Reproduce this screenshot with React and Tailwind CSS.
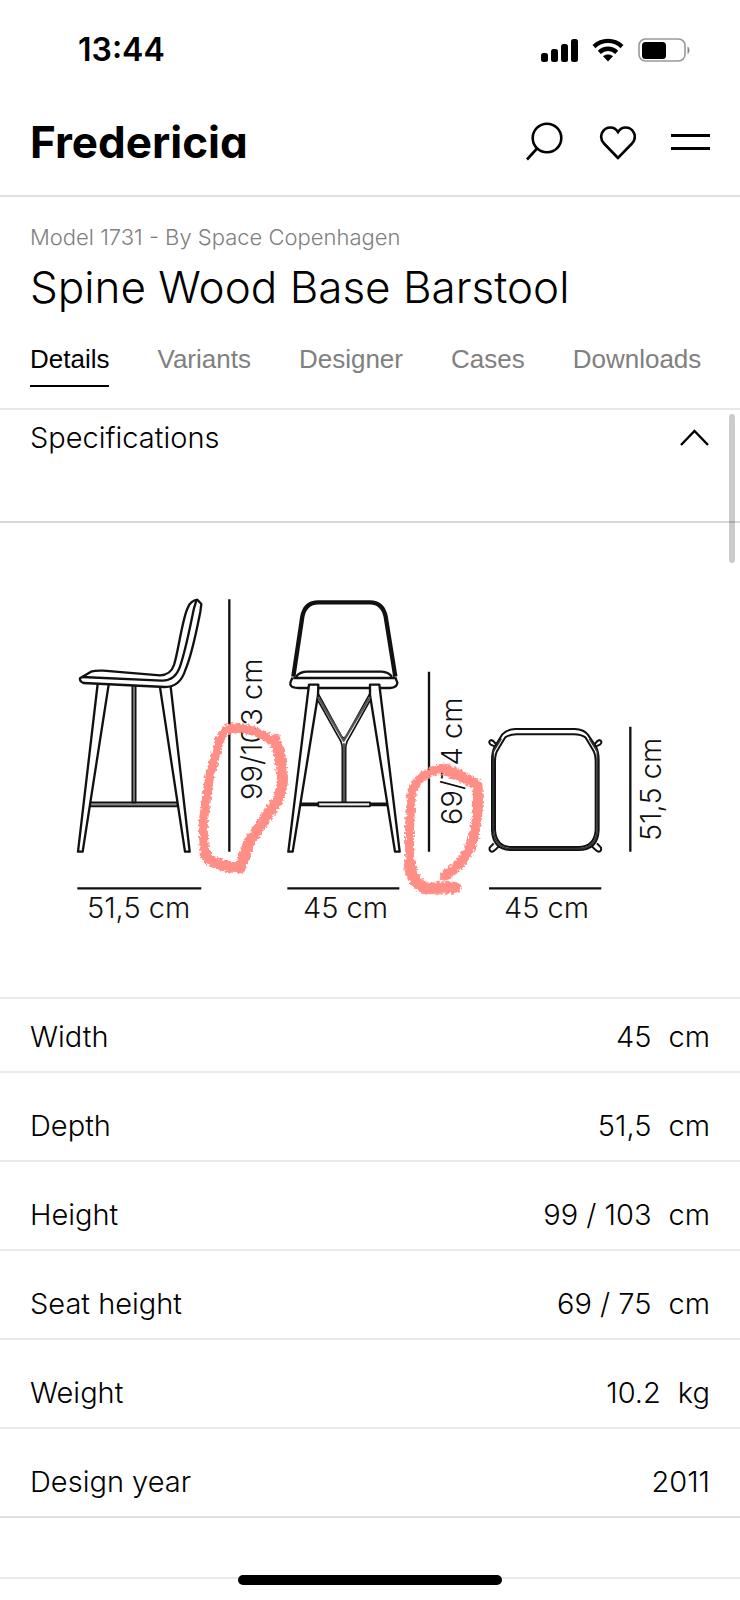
import { useState } from 'react';

const tabs = ['Details', 'Variants', 'Designer', 'Cases', 'Downloads'];

const specs = [
  { label: 'Width', value: '45', unit: 'cm' },
  { label: 'Depth', value: '51,5', unit: 'cm' },
  { label: 'Height', value: '99 / 103', unit: 'cm' },
  { label: 'Seat height', value: '69 / 75', unit: 'cm' },
  { label: 'Weight', value: '10.2', unit: 'kg' },
  { label: 'Design year', value: '2011' },
];

function StatusBar() {
  return (
    <div className="flex h-24 items-center justify-between pl-[78px] pr-[50px] pt-1">
      <span className="font-['Inter',sans-serif] text-[32px] font-semibold leading-none">13:44</span>
      <div className="flex items-center gap-[14px]">
        <svg width="38" height="24" viewBox="0 0 38 24" aria-hidden="true">
          <rect x="1" y="15" width="7" height="9" rx="2.5" />
          <rect x="11" y="11" width="7" height="13" rx="2.5" />
          <rect x="21" y="6" width="7" height="18" rx="2.5" />
          <rect x="31" y="1" width="7" height="23" rx="2.5" />
        </svg>
        <svg width="32" height="24" viewBox="0 0 32 24" fill="none" stroke="black" aria-hidden="true">
          <path d="M2 8.6C10 1 22 1 30 8.6" strokeWidth="4.4" />
          <path d="M7.3 14.3C12.5 9.6 19.5 9.6 24.7 14.3" strokeWidth="4.4" />
          <path d="M16 23.5l-5-5.2c3-2.4 7-2.4 10 0z" fill="black" stroke="none" />
        </svg>
        <svg width="52" height="24" viewBox="0 0 52 24" aria-hidden="true">
          <rect x="1" y="1" width="46" height="22" rx="6.5" fill="none" stroke="#999" strokeWidth="1.6" />
          <rect x="4" y="4" width="24" height="17" rx="3.5" />
          <path d="M49.5 8.5c2.6 1 2.6 6.500 0 7.500z" fill="#888" />
        </svg>
      </div>
    </div>
  );
}

function Header() {
  return (
    <header className="flex h-[101px] items-center justify-between border-b-2 border-[#dedede] px-[30px] pb-2">
      <a href="#" className="font-['Inter',sans-serif] text-[44px] font-bold leading-none [font-feature-settings:'cv11']">
        Fredericia
      </a>
      <div className="flex items-center gap-[35px]">
        <button type="button" aria-label="Search">
          <svg width="37" height="40" viewBox="0 0 37 40" fill="none" stroke="black" strokeWidth="2.6" className="overflow-visible">
            <circle cx="20" cy="16" r="14.300" />
            <path d="M10.500 26L0 37.500" />
          </svg>
        </button>
        <button type="button" aria-label="Favourites">
          <svg width="37" height="40" viewBox="0 0 37 40" fill="none" stroke="black" strokeWidth="2.6">
            <path d="M19 36L5 21.500C-1.500 14 4.500 5.500 11.500 5.500c3.500 0 6 2 7.500 4.500 1.500-2.500 4-4.500 7.500-4.500 7 0 13 8.500 6.500 16z" />
          </svg>
        </button>
        <button type="button" aria-label="Menu">
          <svg width="39" height="40" viewBox="0 0 39 40" fill="none" stroke="black" strokeWidth="3">
            <path d="M0 13.500h39M0 26.500h39" />
          </svg>
        </button>
      </div>
    </header>
  );
}

function Drawing() {
  const third = 'scale(.33333)';
  return (
    <svg
      viewBox="0 0 740 474"
      className="block h-auto w-full font-['Inter',sans-serif] text-[29px] font-light"
      fill="none"
      stroke="#111"
      strokeLinejoin="round"
      role="img"
      aria-label="Dimensions"
    >
      <defs>
        <filter id="crayon" x="-10%" y="-10%" width="120%" height="120%">
          <feTurbulence type="fractalNoise" baseFrequency=".35" numOctaves="2" seed="4" />
          <feDisplacementMap in="SourceGraphic" scale="6" xChannelSelector="R" yChannelSelector="G" />
        </filter>
      </defs>

      {/* Side view */}
      <g transform={`translate(60 57) ${third}`} strokeWidth="7">
        <path d="M60 295L93 275Q105 271 130 272L300 286Q332 285 342 255C355 215 368 110 384 82Q392 62 412 59L424 72L421 95C410 150 397 220 376 270Q360 321 315 321L70 309Q58 304 60 295Z" />
        <path d="M66 291L305 302Q345 303 360 260C380 200 393 125 402 85L409 62" />
        <path d="M113 312L54 815H68L146 314M300 322L375 815H389L332 320" />
        <path d="M217 318H227V668H217ZM92 667H351L353 679H90Z" fill="#888" strokeWidth="5" />
        <path d="M508 58V815M52 925H424" />
      </g>

      {/* Front view */}
      <g transform={`translate(270 57) ${third}`} strokeWidth="7">
        <path d="M70 290L97 110Q105 67 145 67H300Q338 67 347 110L376 290" strokeWidth="13" />
        <path d="M70 294H376M78 290Q90 275 112 275H335Q355 276 366 290" />
        <path d="M68 293Q58 310 62 316Q66 324 85 324H360Q382 322 382 308L376 292" />
        <path d="M117 314H145L144 345L68 815H55ZM300 314H328L389 815H375L300 345Z" fill="white" />
        <path d="M144 340L215 470Q221 477 228 470L300 340M144 362L213 485Q217 495 217 510V667H227V510Q227 495 231 485L300 362" strokeWidth="5" />
        <path d="M144 351L221 482L300 351M222 490V665" stroke="#555" strokeWidth="7" />
        <path d="M92 673H352" strokeWidth="11" />
        <path d="M145 667H300V679H145Z" fill="#eee" strokeWidth="5" />
        <path d="M477 275V815M52 925H388" />
      </g>

      {/* Top view */}
      <g transform={`translate(460 157) ${third}`} strokeWidth="6">
        <path d="M106 200L92 194Q84 186 91 181Q98 178 106 190L110 198M406 200L420 194Q428 186 421 181Q414 178 406 190L402 198" />
        <path d="M101 490L89 503Q87 514 96 515Q103 514 116 499M411 490L423 503Q425 514 416 515Q409 514 396 499" />
        <path d="M165 147H345Q370 148 383 163L408 200Q416 215 416 240V450Q414 510 355 510H155Q98 510 96 450V240Q96 215 104 200L127 163Q140 148 165 147Z" />
        <path d="M170 163H340Q365 164 376 172L396 205Q407 220 407 245V450Q403 501 355 501H155Q109 501 105 450V245Q105 220 116 205L136 172Q147 164 170 163Z" />
        <path d="M100 215V450Q105 506 155 506H355Q408 506 412 450V215L388 176M100 215L124 176" stroke="#333" strokeWidth="5" />
        <path d="M511 140V515M87 625H424" strokeWidth="7" />
      </g>

      <g fill="#111" stroke="none">
        <text x="87" y="395">51,5 cm</text>
        <text x="303" y="395">45 cm</text>
        <text x="504" y="395">45 cm</text>
        <text transform="translate(262 277) rotate(-90)">99/103 cm</text>
        <text transform="translate(462 302) rotate(-90)">69/74 cm</text>
        <text transform="translate(661 318) rotate(-90)">51,5 cm</text>
      </g>

      {/* Hand drawn marks */}
      <g stroke="#ff8e86" strokeLinecap="round" filter="url(#crayon)">
        <g transform={`translate(60 58) ${third}`}>
          <path d="M650 490L605 460Q560 440 515 440Q490 444 478 480L448 590L430 720Q430 800 438 825" strokeWidth="27" />
          <path d="M436 820Q455 855 540 860L562 795" strokeWidth="34" />
          <path d="M545 845L570 780Q610 720 645 670Q675 620 665 560Q660 520 645 475" strokeWidth="33" />
        </g>
        <g transform={`translate(270 58) ${third}`}>
          <path d="M600 598Q560 570 520 562Q450 575 428 625Q415 700 420 860" strokeWidth="27" />
          <path d="M420 850Q420 895 465 922L555 920" strokeWidth="36" />
          <path d="M525 885Q580 850 605 790Q630 700 622 610L520 565" strokeWidth="30" />
        </g>
      </g>
    </svg>
  );
}

export default function App() {
  const [activeTab, setActiveTab] = useState('Details');
  const [open, setOpen] = useState(true);

  return (
    <div className="relative overflow-hidden bg-white font-['Inter',sans-serif] font-light text-black">
      <StatusBar />
      <Header />

      <section className="border-b-2 border-[#e8e8e8] px-[30px] pt-6">
        <p className="text-[22px] leading-8 text-[#808080]">Model 1731 - By Space Copenhagen</p>
        <h1 className="mt-2 text-[44px] leading-[52px]">Spine Wood Base Barstool</h1>
        <nav className="mt-6 flex gap-12 pb-[21px] font-['Liberation_Sans',sans-serif] text-[26px] font-normal">
          {tabs.map((tab) => (
            <button
              key={tab}
              type="button"
              onClick={() => setActiveTab(tab)}
              className={
                tab === activeTab
                  ? 'border-b-2 border-black pb-1 leading-[44px] text-black'
                  : 'border-b-2 border-transparent pb-1 leading-[44px] text-[#808080]'
              }
            >
              {tab}
            </button>
          ))}
        </nav>
      </section>

      <div className="relative">
        <h2 className="border-b-2 border-[#d8d8d8]">
          <button
            type="button"
            aria-expanded={open}
            onClick={() => setOpen(!open)}
            className="flex w-full items-center justify-between px-[30px] pt-2 pb-[63px] text-left text-[29px] leading-10"
          >
            Specifications
            <svg width="31" height="20" viewBox="0 0 31 20" fill="none" stroke="black" strokeWidth="2.4" aria-hidden="true">
              <path d="M2 17L15.500 3L29 17" />
            </svg>
          </button>
        </h2>
        <div className="absolute right-[5px] top-1 h-[149px] w-[6px] rounded-full bg-black/20" />

        {open && (
          <>
            <Drawing />
            <table className="w-full border-b-2 border-[#e0e0e0] text-[29px] leading-10">
              <tbody>
                {specs.map((row) => (
                  <tr key={row.label} className="group border-t-2 border-[#e9e9e9]">
                    <th scope="row" className="pt-[33px] pb-[14px] pl-[30px] text-left font-light group-first:pt-[18px]">{row.label}</th>
                    <td className="pt-[33px] pb-[14px] pr-[30px] text-right group-first:pt-[18px]">
                      {row.value}
                      {row.unit && <span className="ml-[17px]">{row.unit}</span>}
                    </td>
                  </tr>
                ))}
              </tbody>
            </table>
            <div className="h-[61px] border-b-2 border-[#e9e9e9]" />
          </>
        )}
      </div>

      <div className="h-[21px]" />
      <div className="absolute bottom-[15px] left-1/2 h-[10px] w-[264px] -translate-x-1/2 rounded-full bg-black" />
    </div>
  );
}
